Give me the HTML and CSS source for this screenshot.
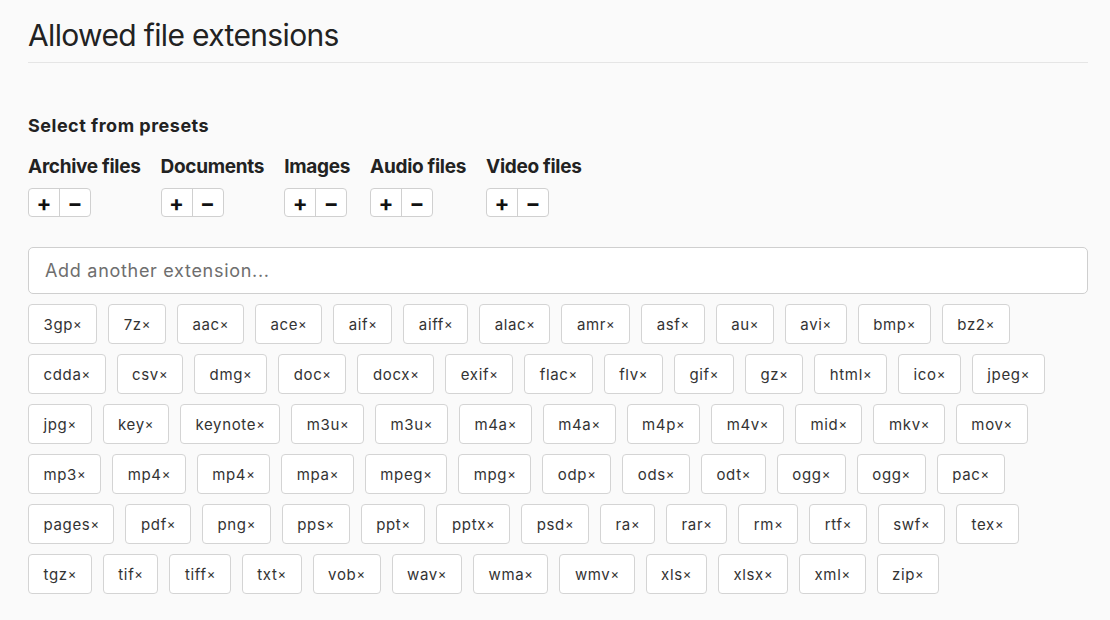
FILE: index.html
```html
<!DOCTYPE html>
<html>
<head>
<meta charset="utf-8">
<link rel="stylesheet" href="styles.css">
</head>
<body>
<div class="page">
  <h1 class="title">Allowed file extensions</h1>
  <div class="rule"></div>
  <h3 class="sub">Select from presets</h3>
  <div class="groups">
    <div class="group"><div class="gname">Archive files</div><div class="btns"><span class="btn">+</span><span class="btn">&minus;</span></div></div>
    <div class="group"><div class="gname">Documents</div><div class="btns"><span class="btn">+</span><span class="btn">&minus;</span></div></div>
    <div class="group"><div class="gname">Images</div><div class="btns"><span class="btn">+</span><span class="btn">&minus;</span></div></div>
    <div class="group"><div class="gname">Audio files</div><div class="btns"><span class="btn">+</span><span class="btn">&minus;</span></div></div>
    <div class="group"><div class="gname">Video files</div><div class="btns"><span class="btn">+</span><span class="btn">&minus;</span></div></div>
  </div>
  <div class="input">Add another extension...</div>
  <div class="tags">
    <div class="row">
      <span class="tag">3gp<i>×</i></span><span class="tag">7z<i>×</i></span><span class="tag">aac<i>×</i></span><span class="tag">ace<i>×</i></span><span class="tag">aif<i>×</i></span><span class="tag">aiff<i>×</i></span><span class="tag">alac<i>×</i></span><span class="tag">amr<i>×</i></span><span class="tag">asf<i>×</i></span><span class="tag">au<i>×</i></span><span class="tag">avi<i>×</i></span><span class="tag">bmp<i>×</i></span><span class="tag">bz2<i>×</i></span>
    </div>
    <div class="row">
      <span class="tag">cdda<i>×</i></span><span class="tag">csv<i>×</i></span><span class="tag">dmg<i>×</i></span><span class="tag">doc<i>×</i></span><span class="tag">docx<i>×</i></span><span class="tag">exif<i>×</i></span><span class="tag">flac<i>×</i></span><span class="tag">flv<i>×</i></span><span class="tag">gif<i>×</i></span><span class="tag">gz<i>×</i></span><span class="tag">html<i>×</i></span><span class="tag">ico<i>×</i></span><span class="tag">jpeg<i>×</i></span>
    </div>
    <div class="row">
      <span class="tag">jpg<i>×</i></span><span class="tag">key<i>×</i></span><span class="tag">keynote<i>×</i></span><span class="tag">m3u<i>×</i></span><span class="tag">m3u<i>×</i></span><span class="tag">m4a<i>×</i></span><span class="tag">m4a<i>×</i></span><span class="tag">m4p<i>×</i></span><span class="tag">m4v<i>×</i></span><span class="tag">mid<i>×</i></span><span class="tag">mkv<i>×</i></span><span class="tag">mov<i>×</i></span>
    </div>
    <div class="row">
      <span class="tag">mp3<i>×</i></span><span class="tag">mp4<i>×</i></span><span class="tag">mp4<i>×</i></span><span class="tag">mpa<i>×</i></span><span class="tag">mpeg<i>×</i></span><span class="tag">mpg<i>×</i></span><span class="tag">odp<i>×</i></span><span class="tag">ods<i>×</i></span><span class="tag">odt<i>×</i></span><span class="tag">ogg<i>×</i></span><span class="tag">ogg<i>×</i></span><span class="tag">pac<i>×</i></span>
    </div>
    <div class="row">
      <span class="tag">pages<i>×</i></span><span class="tag">pdf<i>×</i></span><span class="tag">png<i>×</i></span><span class="tag">pps<i>×</i></span><span class="tag">ppt<i>×</i></span><span class="tag">pptx<i>×</i></span><span class="tag">psd<i>×</i></span><span class="tag">ra<i>×</i></span><span class="tag">rar<i>×</i></span><span class="tag">rm<i>×</i></span><span class="tag">rtf<i>×</i></span><span class="tag">swf<i>×</i></span><span class="tag">tex<i>×</i></span>
    </div>
    <div class="row">
      <span class="tag">tgz<i>×</i></span><span class="tag">tif<i>×</i></span><span class="tag">tiff<i>×</i></span><span class="tag">txt<i>×</i></span><span class="tag">vob<i>×</i></span><span class="tag">wav<i>×</i></span><span class="tag">wma<i>×</i></span><span class="tag">wmv<i>×</i></span><span class="tag">xls<i>×</i></span><span class="tag">xlsx<i>×</i></span><span class="tag">xml<i>×</i></span><span class="tag">zip<i>×</i></span>
    </div>
  </div>
</div>
</body>
</html>
```
FILE: styles.css
```css
html, body {
  margin: 0;
  padding: 0;
  background: #fafafa;
}
body {
  font-family: Inter, "Noto Sans", sans-serif;
  color: #222;
}
.page {
  padding: 17px 22px 0 28px;
}
.title {
  margin: 0;
  font-size: 30px;
  font-weight: 400;
  line-height: 36px;
  color: #222;
  letter-spacing: -0.65px;
}
.rule {
  height: 1px;
  background: #e5e5e5;
  margin-top: 9px;
}
.sub {
  margin: 52px 0 0 0;
  font-size: 18px;
  font-weight: 700;
  line-height: 22px;
  color: #222;
  letter-spacing: 0.5px;
}
.groups {
  display: flex;
  gap: 20px;
  margin-top: 18px;
}
.gname {
  font-size: 19px;
  font-weight: 700;
  line-height: 23px;
  color: #222;
  letter-spacing: -0.3px;
}
.btns {
  display: flex;
  margin-top: 10px;
  width: fit-content;
  border: 1px solid #d0d0d0;
  border-radius: 4px;
  background: #fff;
}
.btn {
  width: 30px;
  height: 27px;
  display: flex;
  align-items: center;
  justify-content: center;
  font-size: 22px;
  font-weight: 700;
  color: #111;
}
.btn + .btn {
  border-left: 1px solid #d0d0d0;
}
.input {
  margin-top: 30px;
  height: 45px;
  border: 1px solid #cfcfcf;
  border-radius: 5px;
  background: #fff;
  display: flex;
  align-items: center;
  padding-left: 16px;
  font-size: 18px;
  letter-spacing: 0.7px;
  color: #6e6e6e;
}
.tags {
  margin-top: 10px;
  display: flex;
  flex-direction: column;
  gap: 10px;
}
.row {
  display: flex;
  gap: 11px;
}
.tag {
  display: flex;
  align-items: center;
  height: 38px;
  padding: 0 14.5px;
  border: 1px solid #d4d4d4;
  border-radius: 4px;
  background: #fff;
  font-size: 15px;
  letter-spacing: 0.65px;
  color: #333;
}
.tag i {
  font-style: normal;
  font-size: 13px;
  margin-left: 0;
  letter-spacing: 0;
}
```
